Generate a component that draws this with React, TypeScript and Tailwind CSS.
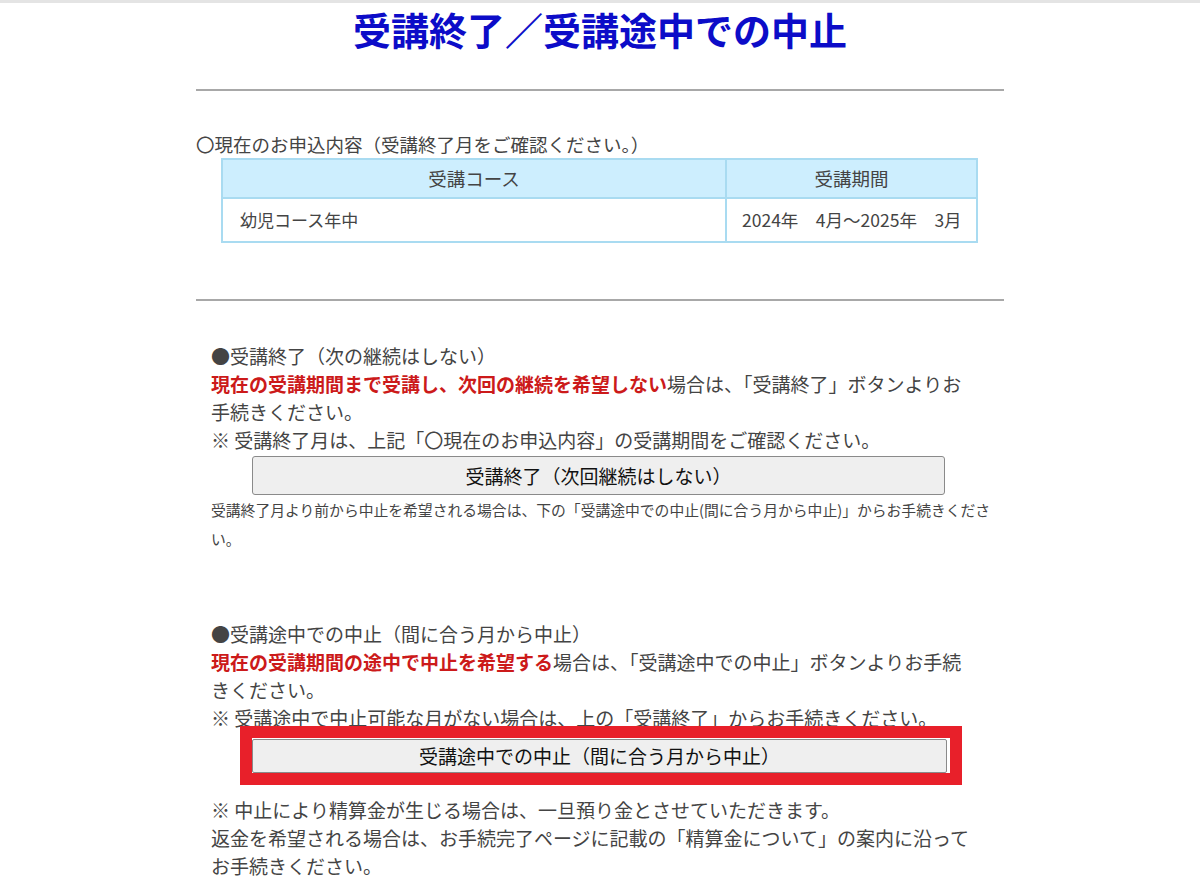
export default function App() {
  const font = { fontFamily: '"Noto Sans CJK JP", "Noto Sans", sans-serif' };

  return (
    <div className="min-h-[885px] bg-white text-[#444]" style={font}>
      {/* top edge */}
      <div className="h-[3px] bg-[#e4e4e4]" />

      <main className="mx-auto w-[808px]">
        <h1 className="mt-[1px] text-center text-[38px] font-bold leading-[50px] text-[#0c0cc8]">
          受講終了／受講途中での中止
        </h1>

        <hr className="mt-[35px] border-t-2 border-[#a8a8a8]" />

        {/* current application */}
        <p className="mt-[40px] whitespace-nowrap text-[18.5px] leading-[26px]">
          〇現在のお申込内容（受講終了月をご確認ください。）
        </p>
        <table className="mt-[1px] ml-[25px] w-[757px] border-collapse">
          <thead>
            <tr className="h-[39px] bg-[#cdeefe]">
              <th className="w-[504px] border-2 border-[#a9dbf1] text-[18.5px] font-normal">受講コース</th>
              <th className="border-2 border-[#a9dbf1] text-[18.5px] font-normal">受講期間</th>
            </tr>
          </thead>
          <tbody>
            <tr className="h-[44px]">
              <td className="border-2 border-[#a9dbf1] pl-[17px] text-[17px]">幼児コース年中</td>
              <td className="border-2 border-[#a9dbf1] pl-[15px] text-[17.5px] whitespace-pre">
                2024年　4月～2025年　3月
              </td>
            </tr>
          </tbody>
        </table>

        <hr className="mt-[56px] border-t-2 border-[#a8a8a8]" />

        {/* section 1 */}
        <section className="mt-[41px] pl-[15px] text-[19px] leading-[28px]">
          <p className="whitespace-nowrap">●受講終了（次の継続はしない）</p>
          <p className="whitespace-nowrap">
            <span className="font-bold text-[#cc1a1a]">現在の受講期間まで受講し、次回の継続を希望しない</span>
            場合は、「受講終了」ボタンよりお
            <br />
            手続きください。
          </p>
          <p className="whitespace-nowrap">※ 受講終了月は、上記「〇現在のお申込内容」の受講期間をご確認ください。</p>
          <button className="mt-[2px] ml-[41px] h-[39px] w-[693px] rounded-[3px] border border-[#8a8a8a] bg-[#efefef] text-[19px] text-[#111]">
            受講終了（次回継続はしない）
          </button>
          <p className="text-[14.8px] leading-[29px]">
            受講終了月より前から中止を希望される場合は、下の「受講途中での中止(間に合う月から中止)」からお手続きくださ
            <br />
            い。
          </p>
        </section>

        {/* section 2 */}
        <section className="mt-[67px] pl-[15px] text-[19px] leading-[28px]">
          <p className="whitespace-nowrap">●受講途中での中止（間に合う月から中止）</p>
          <p className="whitespace-nowrap">
            <span className="font-bold text-[#cc1a1a]">現在の受講期間の途中で中止を希望する</span>
            場合は、「受講途中での中止」ボタンよりお手続
            <br />
            きください。
          </p>
          <p className="whitespace-nowrap">※ 受講途中で中止可能な月がない場合は、上の「受講終了」からお手続きください。</p>
          <div className="relative mt-[7px] ml-[41px] w-[695px]">
            <button className="block h-[34px] w-[695px] rounded-[2px] border border-[#8a8a8a] bg-[#efefef] text-[19px] text-[#111]">
              受講途中での中止（間に合う月から中止）
            </button>
            {/* highlight frame */}
            <div className="pointer-events-none absolute -top-[13px] -right-[15px] -bottom-[12px] -left-[12px] border-[12px] border-[#e8202a]" />
          </div>
          <p className="mt-[23px] whitespace-nowrap">※ 中止により精算金が生じる場合は、一旦預り金とさせていただきます。</p>
          <p className="whitespace-nowrap">
            返金を希望される場合は、お手続完了ページに記載の「精算金について」の案内に沿って
            <br />
            お手続きください。
          </p>
        </section>
      </main>
    </div>
  );
}
